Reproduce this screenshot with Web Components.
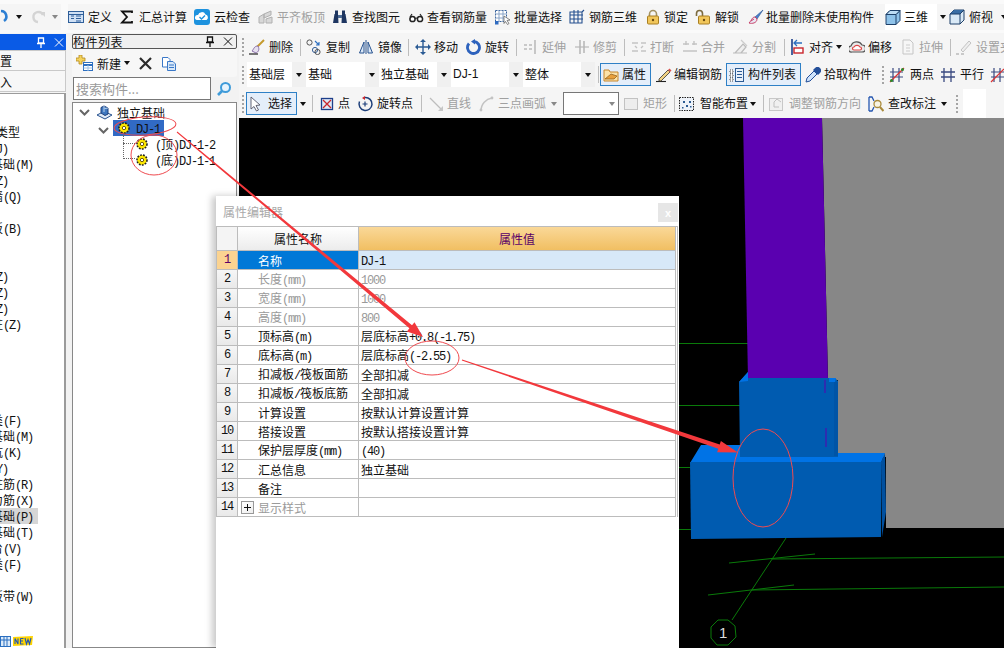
<!DOCTYPE html>
<html lang="zh"><head><meta charset="utf-8"><title>属性编辑器</title>
<style>
html,body{margin:0;padding:0;background:#f2f2f2}
body{font:12px "Liberation Sans","Noto Sans CJK SC",sans-serif;color:#111}
</style></head><body>
<gl-app>
  <gl-toolbar slot="top" style="height:33px;padding:4px 0 3px;background:#fafafa">
    <gl-tool icon="undo" style="--w:13px;--g:0px"></gl-tool>
    <gl-caret style="width:12px"></gl-caret>
    <gl-tool icon="redo" style="--w:24px;--il:5px;--g:0px"></gl-tool>
    <gl-caret style="width:12px" grey></gl-caret>
    <gl-gap style="width:7px"></gl-gap>
    <gl-tool icon="def" style="--w:51px">定义</gl-tool>
    <gl-tool icon="sum" style="--w:75px">汇总计算</gl-tool>
    <gl-tool icon="cloud" style="--w:64px">云检查</gl-tool>
    <gl-tool icon="flat" style="--w:74px;--g:3px" disabled>平齐板顶</gl-tool>
    <gl-tool icon="bino" style="--w:76px">查找图元</gl-tool>
    <gl-tool icon="glass" style="--w:87px;--g:3px">查看钢筋量</gl-tool>
    <gl-tool icon="batch" style="--w:74px;--g:3px">批量选择</gl-tool>
    <gl-tool icon="grid3d" style="--w:76px">钢筋三维</gl-tool>
    <gl-tool icon="lock" style="--w:50px;--g:3px">锁定</gl-tool>
    <gl-tool icon="unlock" style="--w:53px">解锁</gl-tool>
    <gl-tool icon="brush" style="--w:137px;--g:2px">批量删除未使用构件</gl-tool>
    <gl-tool icon="cube" style="--w:52px;--g:3px;background:#fff">三维</gl-tool>
    <gl-caret style="width:12px"></gl-caret>
    <gl-tool icon="cube2" style="--w:52px;--g:4px">俯视</gl-tool>
    <gl-caret style="width:6px"></gl-caret>
  </gl-toolbar>

  <gl-left-panel slot="left"></gl-left-panel>
  <gl-list-panel slot="list"></gl-list-panel>

  <gl-toolbar slot="right" style="height:28px">
    <gl-grip style="width:10px"></gl-grip>
    <gl-tool icon="broom" style="--w:48px">删除</gl-tool><gl-sep style="width:9px"></gl-sep>
    <gl-tool icon="copy2" style="--w:52px">复制</gl-tool>
    <gl-tool icon="mirror" style="--w:47px">镜像</gl-tool><gl-sep style="width:10px"></gl-sep>
    <gl-tool icon="move" style="--w:51px;--g:3px">移动</gl-tool>
    <gl-tool icon="rotate" style="--w:47px;--g:3px">旋转</gl-tool><gl-sep style="width:10px"></gl-sep>
    <gl-tool icon="extend" style="--w:51px;--g:3px" disabled>延伸</gl-tool>
    <gl-tool icon="trim" style="--w:47px;--g:3px" disabled>修剪</gl-tool><gl-sep style="width:10px"></gl-sep>
    <gl-tool icon="brk" style="--w:51px;--g:3px" disabled>打断</gl-tool>
    <gl-tool icon="merge" style="--w:50px;--g:3px" disabled>合并</gl-tool>
    <gl-tool icon="split" style="--w:49px" disabled>分割</gl-tool><gl-sep style="width:8px"></gl-sep>
    <gl-tool icon="align" style="--w:60px;--g:4px;--cm:3px" caret>对齐</gl-tool>
    <gl-tool icon="offset" style="--w:51px;--g:3px">偏移</gl-tool>
    <gl-tool icon="stretch" style="--w:47px;--g:3px" disabled>拉伸</gl-tool><gl-sep style="width:9px"></gl-sep>
    <gl-tool icon="setgrip" style="--w:60px" disabled>设置夹点</gl-tool>
  </gl-toolbar>

  <gl-toolbar slot="right" style="height:27px;margin-bottom:1px">
    <gl-grip style="width:8px"></gl-grip>
    <gl-combo style="width:59px">基础层</gl-combo>
    <gl-combo style="width:73px">基础</gl-combo>
    <gl-combo style="width:72px">独立基础</gl-combo>
    <gl-combo style="width:72px" latin>DJ-1</gl-combo>
    <gl-combo style="width:72px">整体</gl-combo>
    <gl-sep style="width:5px"></gl-sep>
    <gl-tool icon="prop" active style="--w:51px;--il:3px;--g:3px;margin-right:4px">属性</gl-tool>
    <gl-tool icon="pencil" style="--w:71px;--il:1px;--g:2px">编辑钢筋</gl-tool>
    <gl-tool icon="list" active style="--w:75px;--il:3px;--g:3px;margin-right:4px">构件列表</gl-tool>
    <gl-tool icon="pick" style="--w:74px;--g:3px">拾取构件</gl-tool>
    <gl-grip style="width:10px"></gl-grip>
    <gl-tool icon="two" style="--w:51px;--g:5px">两点</gl-tool>
    <gl-tool icon="para" style="--w:50px;--g:4px">平行</gl-tool>
    <gl-tool icon="third" style="--w:13px;--g:0px"></gl-tool>
  </gl-toolbar>

  <gl-toolbar slot="right" style="height:29px">
    <gl-grip style="width:7px"></gl-grip>
    <gl-tool icon="cursor" active style="--w:51px;--il:2px;--g:4px;--am:3px">选择</gl-tool>
    <gl-caret style="width:12px"></gl-caret><gl-sep style="width:10px"></gl-sep>
    <gl-tool icon="ptbox" style="--w:38px;--g:3px">点</gl-tool>
    <gl-tool icon="rotpt" style="--w:61px">旋转点</gl-tool><gl-sep style="width:10px"></gl-sep>
    <gl-tool icon="line" style="--w:51px;--g:3px" disabled>直线</gl-tool>
    <gl-tool icon="arc" style="--w:84px;--g:3px;--cm:5px" disabled caret>三点画弧</gl-tool>
    <gl-select style="width:56px;margin-right:3px"></gl-select>
    <gl-tool icon="rect" style="--w:49px;--il:2px;--g:3px" disabled>矩形</gl-tool><gl-sep style="width:8px"></gl-sep>
    <gl-tool icon="smart" style="--w:81px;--g:5px;--cm:2px" caret>智能布置</gl-tool><gl-sep style="width:8px"></gl-sep>
    <gl-tool icon="adjust" style="--w:100px;--g:5px" disabled>调整钢筋方向</gl-tool>
    <gl-tool icon="mark" style="--w:85px;--g:4px;--cm:5px" caret>查改标注</gl-tool>
    <gl-grip style="width:10px"></gl-grip>
    <gl-gap style="width:23px;background:#fff"></gl-gap>
  </gl-toolbar>

  <gl-canvas slot="canvas"></gl-canvas>
  <gl-prop-dialog slot="over"></gl-prop-dialog>
  <gl-annotations slot="over"></gl-annotations>
</gl-app>

<script>
const S=(d,w=1.3,c='#222')=>`<path d="${d}" fill="none" stroke="${c}" stroke-width="${w}"/>`;
const ICONS={
undo:S('M1 2A5.5 5.5 0 0 1 4 12','2.6','#2d7fd3'),
redo:S('M13 6A5 5 0 1 0 8 13','2.4','#d4d4d4')+'<path d="M10 3h5v5z" fill="#d4d4d4"/>',
def:'<rect x=".5" y="2.5" width="15" height="11" fill="#cfe0f5" stroke="#2f5f9a"/><path d="M.5 5.5h15M8 7h5M8 9.5h5M8 12h5M3 7h3M3 9.5h3" stroke="#2f5f9a"/>',
sum:S('M13 4V2.5H3L8 8L3 13.5H13V12','1.8','#111'),
cloud:'<rect x="0" y="0" width="16" height="16" rx="3" fill="#1d92de"/><path d="M3 11a2.5 2.5 0 0 1 1-5a4 4 0 0 1 7.500-.5a3 3 0 0 1 1 5.500z" fill="#fff"/>'+S('M5.500 8l2 2l3.500-3.500','1.4','#1d92de'),
flat:'<path d="M1 14V8l5-3v9zM6 5l7-3v4l-7 3zM8 14v-4l6-2v6z" fill="#d8d8d8" stroke="#b0b0b0"/>',
bino:'<path d="M1 14l1.500-9h3.500l.5 9zM9.500 14l.5-9h3.500l1.500 9z" fill="#1d3560"/><rect x="3" y="1.500" width="3" height="4" fill="#1d3560"/><rect x="10" y="1.500" width="3" height="4" fill="#1d3560"/><rect x="6" y="6" width="4" height="3" fill="#4b6a94"/>',
glass:'<circle cx="4.500" cy="10" r="2.600" fill="#fff" stroke="#222" stroke-width="1.500"/><circle cx="12" cy="10" r="2.600" fill="#fff" stroke="#222" stroke-width="1.500"/>'+S('M7 9.500c1-.8 1.500-.8 2.500 0M2 8L4 5M14 8l-2-3',1.2),
batch:'<rect x=".5" y="1.500" width="11" height="11" fill="#fff" stroke="#35609a" stroke-dasharray="2 1"/><path d="M.5 5h11M.5 9h11M4 1.500v11M8 1.500v11" stroke="#8aa5c8"/><rect x="0" y="12" width="3.500" height="3.500" fill="#2f6bc0"/><path d="M9 7l6 4l-3 .5l2 3l-1.500 1l-2-3l-1.500 2z" fill="#fff" stroke="#555" stroke-width=".7"/>',
grid3d:S('M1 3V14H13V3ZM5 1V14M9 1V14M1 6H14M1 10H14M13 3L15 1',1.1,'#26508f'),
lock:S('M4.500 7V5a3.500 3.500 0 0 1 7 0v2',1.6,'#a39263')+'<rect x="2.500" y="7" width="11" height="8" rx="1" fill="#f1c65a" stroke="#a97f22"/><circle cx="8" cy="11" r="1.200" fill="#6b4a10"/>',
unlock:S('M1.500 7V4.500a3 3 0 0 1 6 0V7',1.6,'#7d6b3e')+'<rect x="3.500" y="7" width="11" height="8" rx="1" fill="#f1c65a" stroke="#a97f22"/><circle cx="9" cy="11" r="1.200" fill="#6b4a10"/>',
brush:'<path d="M15 1L7 8l2 2z" fill="#4a80cf" stroke="#27528f" stroke-width=".6"/><path d="M7 8c-3 0-3 3-6 6c3 1 8 0 8-4z" fill="#e8e8f4" stroke="#c7416a"/><path d="M3 12l3-2" stroke="#c7416a"/>',
cube:'<path d="M1 5.500L5 1.500H15V11.500L11 15.500H1z" fill="#8fc3ea" stroke="#1d3f68"/><path d="M1 5.500H11V15.500M11 5.500L15 1.500" fill="none" stroke="#1d3f68"/><path d="M1 5.500L5 1.500H15L11 5.500z" fill="#bcdcf4"/><path d="M1 5.500L5 1.500H15L11 5.500H1" fill="none" stroke="#1d3f68"/>',
cube2:'<path d="M1 5L5 1H15V11L11 15H1z" fill="#d9e9f6" stroke="#1d3f68"/><path d="M1 5L5 1H15L11 5z" fill="#3a6ea5"/><path d="M1 5H11V15M11 5L15 1" fill="none" stroke="#1d3f68"/>',
broom:'<path d="M15 1L8 8" stroke="#c59a2c" stroke-width="2"/><path d="M9 7c-4 0-4 3-6 5l4 2c2-1 4-3 2-7z" fill="#e6e0ef" stroke="#8a6fa8"/><path d="M0 15h9" stroke="#222" stroke-width="1.200"/>',
copy2:'<circle cx="3.500" cy="3.500" r="2.600" fill="none" stroke="#555"/><circle cx="9" cy="11" r="2.600" fill="none" stroke="#35609a"/><circle cx="11.500" cy="13" r="2.600" fill="none" stroke="#555"/>'+S('M9 2l4 4M13 3v3h-3',1.1,'#2d6fc0'),
mirror:S('M8 1V15','1','#27528f')+'<path d="M6 3L1.500 14H6zM10 3L14.500 14H10z" fill="#dbe8f7" stroke="#27528f"/>',
move:S('M8 1V15M1 8H15',1.4,'#2b5b94')+'<path d="M8 0l3 3H5zM8 16l3-3H5zM0 8l3-3v6zM16 8l-3-3v6z" fill="#2b5b94"/>',
rotate:S('M3 4.500A6 6 0 1 0 8 2.500',2.8,'#2d62bd')+'<path d="M9 0v5.500l-4-3z" fill="#2d62bd"/>',
extend:S('M1 6h3M6 6h3M1 10h3M6 10h3',1.5,'#bbb')+S('M12 1V15',1.6,'#bbb'),
trim:S('M1 8h14',1.5,'#c4c4c4')+S('M6 1V15M10 2V14',1.5,'#b5b5b5'),
brk:S('M1 4h6M10 4h5M1 12h6M10 12h5',1.6,'#c3c3c3')+S('M4 7l2 2M12 7l-2 2',1.4,'#c3c3c3'),
merge:S('M1 12h14M1 5h6M10 5h5',1.6,'#c3c3c3')+S('M4 2v4M12 2v4',1.400,'#c3c3c3'),
split:'<path d="M1 14H15M3 14L11 5l3 3l-5 6" fill="#eee" stroke="#bbb" stroke-width="1.200"/>'+S('M9 1L15 7',1.2,'#ccc'),
align:S('M3 0V16',1.6,'#1d3f8a')+'<rect x="5" y="9" width="9" height="5" fill="#fff" stroke="#c9262d" stroke-width="1.400"/>'+S('M13 4H5M8 1L5 4l3 3',1.300,'#2d6fc0'),
offset:'<path d="M3 13a3 3 0 0 1-1-6a6 6 0 0 1 11-1a3.500 3.500 0 0 1 0 7z" fill="#e8e8e8" stroke="#555" stroke-width="1.200"/><path d="M5 11a1.500 1.500 0 0 1 0-3a3.500 3.500 0 0 1 6 0a1.500 1.500 0 0 1 0 3z" fill="#fff" stroke="#d44" stroke-width="1.200"/>',
stretch:'<path d="M3 1H10L13 4V15H3z" fill="#f6f6f6" stroke="#c5c5c5"/>'+S('M6 6h4M6 9h4M6 12h4',1,'#ccc'),
setgrip:S('M0 15h3M5 15h3',1.300,'#bbb')+'<path d="M5 11L13 2l2 2l-8 9z" fill="#eee" stroke="#c3c3c3"/>',
prop:'<path d="M1 3H6L7 5H15V14H1z" fill="#fbe2a8" stroke="#c8862a"/><path d="M2 12L8 7l6 2l-3 3z" fill="#e8a03c" stroke="#8a5a18" stroke-width=".7"/>',
pencil:S('M0 14.500H10',1.100,'#222')+'<path d="M3 12L12 3l2 2l-9 9H3z" fill="#f2d384" stroke="#333" stroke-width=".8"/><path d="M12 3l1.500-1.500l2 2L14 5z" fill="#d9534f"/>',
list:'<rect x="6.500" y="1.500" width="8" height="13" fill="#e8f0fa" stroke="#2b5b94"/>'+S('M8 4.500h5M8 7.500h5M8 10.500h5',1,'#2b5b94')+'<path d="M1 3h3v3H1zM1 7h3v3H1zM1 11h3v3H1z" fill="#fff" stroke="#444" stroke-dasharray="1 1"/>',
pick:'<path d="M1 15l1-4l7-7l3 3l-7 7z" fill="#cfe3fa" stroke="#244f99"/><path d="M8 3l2-2a2.500 2.500 0 0 1 5 5l-2 2z" fill="#244f99"/>',
two:S('M4 1V15M10 1V15M1 5H14M1 10H14',1.200,'#3a4a80')+S('M1 15L15 1',1.200,'#d33')+'<circle cx="2.500" cy="13.500" r="1.500" fill="#2a8a2a"/><circle cx="13.500" cy="2.500" r="1.500" fill="#2a8a2a"/>',
para:S('M4 1V15M11 1V15M1 5H15M1 10H15',1.300,'#3a4a80'),
third:S('M4 1V15M10 1V15M1 5H15M1 10H15',1.200,'#3a4a80')+S('M1 15L14 2',1.200,'#d33'),
cursor:'<path d="M3 1L3 13L6 10.500L8.500 15L10.500 14L8 9.500L12 9z" fill="#fff" stroke="#556" stroke-width=".9"/>',
ptbox:'<rect x="2.500" y="2.500" width="11" height="11" fill="#dfe9f7" stroke="#1d3f8a" stroke-width="1.300"/>'+S('M4 4L12 12M12 4L4 12',1.300,'#c9262d'),
rotpt:S('M2.500 5.500A6.500 6.500 0 1 0 8 1.500',1.500,'#1d3f7a')+'<path d="M8 0v4l-3-2z" fill="#c9262d"/>'+S('M8 5.500V10.500M5.500 8H10.500',1.200,'#1d3f7a'),
line:S('M2 2L14 14',1.300,'#bdbdbd')+'<path d="M15 15V10L10 15z" fill="#c6c6c6"/>',
arc:S('M2 15C2 8 7 3 13 2',1.500,'#c3c3c3')+'<circle cx="2" cy="14" r="1.400" fill="#c3c3c3"/><circle cx="13" cy="2" r="1.400" fill="#c3c3c3"/>',
rect:'<rect x=".5" y="2.500" width="13" height="11" fill="#ededed" stroke="#c2c2c2"/>',
smart:'<rect x=".5" y="1.500" width="14" height="13" fill="#eef3fa" stroke="#222" stroke-dasharray="1.500 1"/><path d="M4 5h2v2H4zM10 5h2v2h-2zM7 9h2v2H7zM3 11h1.500v1.500H3zM11 10h1.500v1.500H11z" fill="#2b5b94"/>',
adjust:'<rect x="1.500" y="2.500" width="13" height="12" fill="#f0f0f0" stroke="#c8c8c8"/><path d="M6 6v5h5M6 6l3-3l4 3" fill="none" stroke="#c0c0c0"/>',
mark:S('M1 1h3L6 5M1 15h3L6 11M1 1V15',1.300,'#2456b0')+'<circle cx="9.500" cy="8" r="3.500" fill="#f8f4e4" stroke="#a98a3c" stroke-width="1.300"/>'+S('M12 11l3.500 4',2,'#a98a3c'),
};
const GEAR='<svg viewBox="0 0 14 14" width="14" height="14"><circle cx="7" cy="7" r="5" fill="#ffe900" stroke="#222" stroke-width="1.600" stroke-dasharray="1.800 1.200"/><circle cx="7" cy="7" r="3.400" fill="#ffe900"/><circle cx="7" cy="7" r="1.700" fill="#fff" stroke="#5a4a00" stroke-width=".9"/></svg>';
const mono=s=>s.replace(/[\x20-\x7e]+/g,m=>`<span class="m">${m}</span>`);
const MONO='.m{font-family:"Liberation Mono",monospace;font-size:12px;letter-spacing:-1.2px}';
const CJK='font-family:"Noto Sans CJK SC",sans-serif;';

class Base extends HTMLElement{
  constructor(){super();this.attachShadow({mode:'open'}).innerHTML=this.markup();}
  markup(){return '';}
}
const def=(n,c)=>customElements.define(n,c);

def('gl-app',class extends Base{markup(){return `<style>
:host{display:grid;position:relative;width:1004px;height:648px;overflow:hidden;background:#f2f2f2;
 grid-template-columns:66px 6px 165px 2px 765px;grid-template-rows:33px 1fr}
.top{grid-column:1/-1}
.left{grid-column:1;grid-row:2;min-height:0;display:flex}
.list{grid-column:3;grid-row:2;min-height:0;display:flex}
.right{grid-column:5;grid-row:2;display:flex;flex-direction:column;min-height:0}
.tb{background:#f5f5f5;flex:none}
.cv{flex:1;min-height:0;display:flex}
</style>
<div class="top"><slot name="top"></slot></div>
<div class="left"><slot name="left"></slot></div>
<div class="list"><slot name="list"></slot></div>
<div class="right"><div class="tb"><slot name="right"></slot></div><div class="cv"><slot name="canvas"></slot></div></div>
<slot name="over"></slot>`;}});

def('gl-toolbar',class extends Base{markup(){return `<style>
:host{display:flex;align-items:stretch;background:#f5f5f5;box-sizing:border-box;overflow:hidden;white-space:nowrap}
</style><slot></slot>`;}});

def('gl-tool',class extends Base{markup(){
 const ic=ICONS[this.getAttribute('icon')]||'';
 return `<style>
:host{display:flex;flex:none;align-items:center;box-sizing:border-box;width:var(--w,auto);padding-left:var(--il,0);${CJK}font-size:12px;color:#111;background:#f5f5f5}
:host([disabled]){color:#a0a0a0}
:host([active]){background:#e4eefa;box-shadow:inset 0 0 0 1px #2e80c6;margin-top:var(--am,2px);margin-bottom:var(--am,2px)}
svg{flex:none;margin-right:var(--g,4px);display:block}
.l{display:block;padding-bottom:2px;line-height:17px}
.c{display:none;flex:none;width:0;height:0;margin-left:var(--cm,3px);border:3.5px solid transparent;border-top:4px solid #111;border-bottom:0}
:host([caret]) .c{display:block}
:host([disabled]) .c{border-top-color:#888}
</style><svg viewBox="0 0 16 16" width="16" height="16">${ic}</svg><span class="l"><slot></slot></span><span class="c"></span>`;}});

def('gl-caret',class extends Base{markup(){return `<style>
:host{display:flex;flex:none;align-items:center;justify-content:center;background:#f5f5f5}
i{width:0;height:0;border:3.5px solid transparent;border-top:4px solid #111;border-bottom:0}
:host([grey]) i{border-top-color:#888}
</style><i></i>`;}});

def('gl-sep',class extends Base{markup(){return `<style>
:host{display:flex;flex:none;align-items:center;background:#f5f5f5}
i{display:block;width:1px;height:17px;margin-left:3px;background:#bdbdbd}
</style><i></i>`;}});

def('gl-grip',class extends Base{markup(){return `<style>
:host{display:flex;flex:none;align-items:center;background:#f5f5f5}
i{display:block;width:2px;height:18px;margin-left:3px;background:repeating-linear-gradient(#a5a5a5 0 2px,transparent 2px 4px)}
</style><i></i>`;}});

def('gl-gap',class extends Base{markup(){return `<style>:host{display:block;flex:none}</style>`;}});

def('gl-combo',class extends Base{markup(){return `<style>
:host{display:flex;flex:none;box-sizing:border-box;${CJK}font-size:12px;padding:1px 0;background:#f5f5f5}
:host([latin]) .v{font-family:"Liberation Sans",sans-serif}
.v{flex:1;background:#fff;padding:0 0 2px 2px;display:flex;align-items:center}
.b{flex:none;width:14px;display:flex;align-items:center;justify-content:center;background:#f0f0f0}
i{width:0;height:0;border:3.5px solid transparent;border-top:4px solid #111;border-bottom:0}
</style><div class="v"><slot></slot></div><div class="b"><i></i></div>`;}});

def('gl-select',class extends Base{markup(){return `<style>
:host{display:flex;flex:none;box-sizing:border-box;height:23px;align-self:center;align-items:center;justify-content:flex-end;border:1px solid #777;background:#fff;padding-right:3px}
i{width:0;height:0;border:3.5px solid transparent;border-top:4px solid #888;border-bottom:0}
</style><i></i>`;}});

const CATS=[['类型',20],['(J)',8],['基础(M)',33],['(Z)',8],['墙(Q)',21],['',0],['板(B)',21],['',0],['',0],['(Z)',8],['(Z)',8],['(Z)',8],['柱(Z)',21],['',0],['',0],['',0],['',0],['',0],
['类(F)',21],['基础(M)',33],['坑(K)',21],['(Y)',8],['柱筋(R)',33],['力筋(X)',33],['基础(P)',33,1],['基础(T)',33],['台(V)',21],['类(F)',21],['',0],['板带(W)',33]];
def('gl-left-panel',class extends Base{markup(){return `<style>
:host{display:flex;flex-direction:column;width:66px;box-sizing:border-box;background:#f5f5f5;${CJK}font-size:12px;padding-top:1px}
.title{height:16px;flex:none;background:#0a5be6;display:flex;align-items:center;justify-content:flex-end;gap:8px;padding-right:2px}
.tab{height:21px;flex:none;display:flex;align-items:center;border:1px solid #c9c9c9;border-left:0;box-sizing:border-box;background:#f7f7f7}
.tab+.tab{border-top:0}
.cats{flex:1;min-height:0;margin-top:1px;background:#fff;border-right:2px solid #9b9b9b;border-top:1px solid #9b9b9b;padding-top:30px;display:flex;flex-direction:column;position:relative}
.r{height:16px;flex:none;overflow:hidden;white-space:nowrap;line-height:15px}
.cell{display:flex;justify-content:flex-end;overflow:hidden;height:16px;box-sizing:content-box}
.s{background:#d6d6d6}
.bar{position:absolute;left:0;bottom:1px;display:flex;align-items:flex-start}
.ng,.new{display:block}
${MONO}
</style>
<div class="title">
 <svg width="10" height="11" viewBox="0 0 10 11">${S('M2.500 1H7.500V6H2.500ZM1 6.500H9M5 7V11',1.300,'#fff')}</svg>
 <svg width="10" height="11" viewBox="0 0 10 11">${S('M1 1.500L9 9.500M9 1.500L1 9.500',1,'#fff')}</svg>
</div>
<div class="tab">置</div><div class="tab">入</div>
<div class="cats">${CATS.map(c=>`<div class="r"><div class="cell${c[2]?' s':''}" style="width:${c[1]}px;padding-right:${c[2]?5:0}px"><span style="flex:none">${c[0]?mono(c[0]):''}</span></div></div>`).join('')}
<div class="bar">
 <svg class="ng" width="12" height="11" viewBox="0 0 12 11"><rect x=".5" y=".5" width="10" height="10" fill="#dcebfa" stroke="#2a6fc0"/><path d="M4 0v11M7 0v11M0 4h11" stroke="#2a6fc0"/></svg>
 <svg class="new" width="22" height="10" viewBox="0 0 22 10"><path d="M1 1l20-1l-1 9l-19 1z" fill="#ffd400"/>${S('M3 8V2.500L6 8V2.500M8.500 2.500V8H11.500M8.500 5H11M8.500 2.500H11.500M13 2l1.500 6L16 3.500L17.500 8L19 2',1.100,'#1f56b5')}</svg>
</div>
</div>`;}});

def('gl-list-panel',class extends Base{markup(){return `<style>
:host{display:flex;flex-direction:column;width:165px;box-sizing:border-box;${CJK}font-size:12px;padding-top:1px;background:#f2f2f2}
.title{height:15px;flex:none;box-sizing:border-box;border:1px solid #555;border-radius:2px;display:flex;align-items:center;font-size:12px;letter-spacing:.5px;background:#f0f0f0;padding-right:3px}
.title span{flex:1;margin-top:-1px}
.title svg{margin-left:8px}
.tb{height:28px;flex:none;display:flex;align-items:center;padding-left:4px;background:#f7f7f7;border-radius:3px}
.new{margin-left:4px}
.caret{width:0;height:0;border:3px solid transparent;border-top:4px solid #111;border-bottom:0;margin-left:3px}
.sr{height:23px;flex:none;display:flex;align-items:center;margin-bottom:2px}
.in{width:138px;height:23px;box-sizing:border-box;border:1px solid #777;background:#fff;color:#9a9a9a;font-size:13px;padding-left:2px;display:flex;align-items:center;margin-left:1px;white-space:nowrap}
.mg{margin-left:5px}
</style>
<div class="title"><span>构件列表</span>
 <svg width="10" height="11" viewBox="0 0 10 11">${S('M2.500 1H7.500V6H2.500ZM1 6.500H9M5 7V11',1.300,'#111')}</svg>
 <svg width="10" height="11" viewBox="0 0 10 11">${S('M1 1.500L9 9.500M9 1.500L1 9.500',1,'#111')}</svg>
</div>
<div class="tb">
 <svg width="17" height="16" viewBox="0 0 17 16"><path d="M3 0h3v3h3v3H6v3H3V6H0V3h3z" fill="#f4d35e" stroke="#b58a1e" stroke-width=".8"/><rect x="7.500" y="7.500" width="9" height="8" fill="#fff" stroke="#2d6fc0"/><path d="M7.500 10h9" stroke="#2d6fc0" stroke-width="2"/><path d="M7.500 13h9M12 10v6" stroke="#9cc0e6"/></svg>
 <span class="new">新建</span><i class="caret"></i>
 <svg style="margin-left:8px" width="15" height="15" viewBox="0 0 15 15">${S('M2 2L13 13M13 2L2 13',2.200,'#2b2b2b')}</svg>
 <svg style="margin-left:8px" width="16" height="15" viewBox="0 0 16 15"><path d="M1.500 1.500H7L9 3.500V11H1.500z" fill="#fff" stroke="#3a78c8"/><path d="M6.500 5.500H12L14.500 8V14.500H6.500z" fill="#d8e8f8" stroke="#3a78c8"/><path d="M8 9h5M8 11.500h5" stroke="#3a78c8"/></svg>
</div>
<div class="sr"><div class="in">搜索构件...</div>
 <svg class="mg" width="16" height="16" viewBox="0 0 16 16"><circle cx="9.500" cy="6.500" r="4.500" fill="#e8f4fd" stroke="#3f9bd9" stroke-width="2"/>${S('M6 10L2 14',2.600,'#3f9bd9')}</svg>
</div>
<gl-tree style="flex:1;min-height:0"></gl-tree>`;}});

def('gl-tree',class extends Base{markup(){const ch=`<svg width="11" height="7" viewBox="0 0 11 7">${S('M1 1L5.500 5.500L10 1',2,'#666')}</svg>`;return `<style>
:host{display:block;box-sizing:border-box;border:1px solid #888;background:#fff;padding-top:1px;${CJK}font-size:12px;color:#111;overflow:hidden;position:relative}
.r{height:16px;display:flex;align-items:center;white-space:nowrap}
.top{padding-left:6px}
.top svg.f{margin:0 4px 0 6px}
.sel{margin-left:40px;width:51px;background:#316ac5;height:16px;display:flex;align-items:center;padding-left:4px;box-sizing:border-box;position:relative}
.sel svg{margin-right:5px}
.exp{position:absolute;left:25px}
.c{padding-left:62px;position:relative}
.c svg{margin-right:6px}
.d1{position:absolute;left:50px;top:32px;width:12px;height:24px;border-left:1px dotted #666;border-bottom:1px dotted #666;box-sizing:border-box}
.d2{position:absolute;left:50px;top:40px;width:12px;height:0;border-top:1px dotted #666}
${MONO}
</style>
<div class="r top">${ch}<svg class="f" width="17" height="15" viewBox="0 0 17 15"><path d="M1 10L8 6.500L16 10L9 14z" fill="#dfeaf7" stroke="#27528f"/><path d="M5 8V2.500L8 1L12 3V9L9 10.500L5 8z" fill="#3f78c0" stroke="#1d3f7a"/><path d="M8 1V7M8.500 3.500L12 3" stroke="#bcd4ee"/></svg><span>独立基础</span></div>
<div class="r"><span class="exp">${ch}</span><div class="sel">${GEAR}<span>${mono('DJ-1')}</span></div></div>
<div class="r c">${GEAR}<span>${mono('(顶)DJ-1-2')}</span></div>
<div class="r c">${GEAR}<span>${mono('(底)DJ-1-1')}</span></div>
<i class="d1"></i><i class="d2"></i>`;}});

const ROWS=[['名称','DJ-1'],['长度(mm)','1000',1],['宽度(mm)','1000',1],['高度(mm)','800',1],['顶标高(m)','层底标高+0.8(-1.75)'],['底标高(m)','层底标高(-2.55)'],['扣减板/筏板面筋','全部扣减'],['扣减板/筏板底筋','全部扣减'],['计算设置','按默认计算设置计算'],['搭接设置','按默认搭接设置计算'],['保护层厚度(mm)','(40)'],['汇总信息','独立基础'],['备注',''],['显示样式','',1,1]];
def('gl-prop-dialog',class extends Base{markup(){return `<style>
:host{position:absolute;left:216px;top:196px;width:463px;height:452px;background:#fff;box-shadow:-4px 0 7px rgba(0,0,0,.22);${CJK}font-size:12px;color:#111}
.h{height:30px;display:flex;justify-content:space-between;align-items:flex-start;box-sizing:border-box}
.t{color:#a9a9a9;margin:7px 0 0 7px}
.x{width:20px;height:19px;margin:7px 1px 0 0;background:#e6e6e6;color:#fff;font:700 11px "Liberation Sans",sans-serif;display:flex;align-items:center;justify-content:center}
.g{display:grid;grid-template-columns:21px 121px 317px;width:462px;box-sizing:border-box;border:1px solid #bcbcbc;border-bottom:0;padding-right:1px;grid-auto-rows:19px;grid-template-rows:24px}
.g>div{box-sizing:border-box;border-right:1px solid #bcbcbc;border-bottom:1px solid #bcbcbc;display:flex;align-items:center;white-space:nowrap;overflow:hidden}
.n{justify-content:center;background:linear-gradient(#f6f6f6,#e9e9e9)}
.a{padding-left:20px}
.v{padding-left:2px}
.hd{justify-content:center;background:linear-gradient(#fff,#ececec)}
.hv{justify-content:center;background:linear-gradient(#fad898,#f1bf62);color:#5a0068}
.on.n{background:#fbd391;color:#5a0068}
.on.a{background:#0078d7;color:#fff}
.on.v{background:#d7e8f8}
.dim{color:#9a9a9a}
.pl{padding-left:3px}
.p{display:block;box-sizing:border-box;width:13px;height:13px;border:1px solid #999;margin-right:4px;position:relative;flex:none;background:linear-gradient(135deg,#fff,#eee)}
.p::before{content:"";position:absolute;left:2px;right:2px;top:5px;height:1px;background:#111}
.p::after{content:"";position:absolute;top:2px;bottom:2px;left:5px;width:1px;background:#111}
${MONO}
</style>
<div class="h"><div class="t">属性编辑器</div><div class="x">x</div></div>
<div class="g"><div class="n" style="background:#f4f4f4"></div><div class="hd">属性名称</div><div class="hv">属性值</div>
${ROWS.map((r,i)=>{const on=i==0?' on':'',dim=r[2]?' dim':'';
 return `<div class="n${on}">${mono(String(i+1))}</div><div class="${r[3]?'pl':'a'}${on}${dim}">${r[3]?'<i class="p"></i>':''}<span>${mono(r[0])}</span></div><div class="v${on}${dim}"><span>${mono(r[1])}</span></div>`;}).join('')}
</div>`;}});

def('gl-canvas',class extends Base{markup(){return `<style>
:host{display:block;flex:1;background:#000;position:relative;overflow:hidden}
svg{display:block}
text{font:15px "Liberation Sans",sans-serif;fill:#ddd}
</style>
<svg width="765" height="530" viewBox="239 118 765 530">
<path d="M822 118L828 380H838V457L886 457V528H1004V118z" fill="#878787"/>
<g fill="none" stroke="#0a7a0a" stroke-width="1">
<path d="M678 343.500H748M678 405.500H740M678 467.500H691M678 529.500H691"/>
<path d="M786 538L732 620"/>
<path d="M729 563L815 554M772 559L1004 557M708 595L794 585M752 590L1004 587"/>
<path d="M718 620L728 620L735 626L736 637L728 645L717 645L711 638L711 627z"/>
</g>
<text x="719" y="638">1</text>
<path d="M743 118H822L828 380H748z" fill="#5a00b0"/>
<path d="M739 382L748 372V378L829 378L835 378L838 381L838 457L740 458z" fill="#005bb0"/>
<path d="M739 382L748 372V381z" fill="#0073e6"/>
<path d="M829 378H836L835 382H829z" fill="#0073e6"/>
<path d="M834 382H838L838 456H834z" fill="#0054a6"/>
<path d="M825 380V393M826 428V447" stroke="#5a00b0"/>
<path d="M690 463L701 445H740V457H838V453H885L881 463z" fill="#0073e6"/>
<path d="M690 462L881 462V537L691 539z" fill="#005bb0"/>
<path d="M881 462L885 453L886 512L882 537z" fill="#0050a0"/>
</svg>`;}});

def('gl-annotations',class extends Base{markup(){return `<style>
:host{position:absolute;left:0;top:0;width:1004px;height:648px;pointer-events:none}
svg{display:block}
</style>
<svg width="1004" height="648" viewBox="0 0 1004 648">
<g fill="none" stroke="#ef4b50" stroke-width="1">
<ellipse cx="145" cy="126" rx="31" ry="9" transform="rotate(-4 145 126)"/>
<ellipse cx="154" cy="155" rx="23" ry="20"/>
<ellipse cx="432" cy="358" rx="27" ry="17"/>
<ellipse cx="763" cy="478" rx="30" ry="49"/>
</g>
<g fill="#f2383c">
<path d="M176.700 132.400L177.300 131.600L412 325.300L414.500 322.200L423 337L406.900 331.400L409.400 328.300z"/>
<path d="M461.800 360.500L462.200 359.500L719.700 444.500L720.900 440.900L738 452.500L717.100 452.300L718.300 448.700z"/>
</g>
</svg>`;}});
</script>
</body></html>
